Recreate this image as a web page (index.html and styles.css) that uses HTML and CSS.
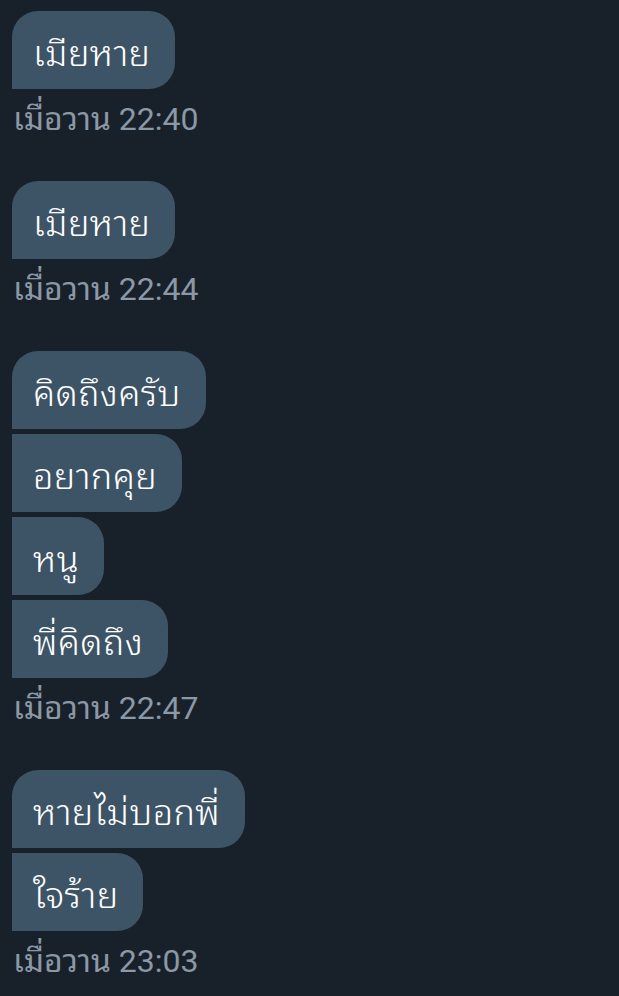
FILE: index.html
```html
<!DOCTYPE html>
<html lang="th">
<head>
<meta charset="utf-8">
<title>Messages</title>
<link rel="stylesheet" href="styles.css">
</head>
<body>
<main class="thread">
  <section class="group">
    <div class="bubble">เมียหาย</div>
    <div class="time">เมื่อวาน 22:40</div>
  </section>
  <section class="group">
    <div class="bubble">เมียหาย</div>
    <div class="time">เมื่อวาน 22:44</div>
  </section>
  <section class="group">
    <div class="bubble">คิดถึงครับ</div>
    <div class="bubble">อยากคุย</div>
    <div class="bubble">หนู</div>
    <div class="bubble">พี่คิดถึง</div>
    <div class="time">เมื่อวาน 22:47</div>
  </section>
  <section class="group">
    <div class="bubble">หายไม่บอกพี่</div>
    <div class="bubble">ใจร้าย</div>
    <div class="time">เมื่อวาน 23:03</div>
  </section>
</main>
</body>
</html>
```

FILE: styles.css
```css
html, body {
  margin: 0;
  padding: 0;
  background: #18202a;
}

.thread {
  display: flex;
  flex-direction: column;
  gap: 44px;
  padding: 11px 12px;
}

.group {
  display: flex;
  flex-direction: column;
  align-items: flex-start;
  gap: 5px;
}

.bubble {
  background: #3d5466;
  color: #ffffff;
  font-family: "Noto Sans Thai Looped", "Noto Looped Thai UI", "Noto Looped Thai", "Noto Sans Thai UI Looped", "Loma", "Garuda", "Waree", "Norasi", "Noto Sans Thai", sans-serif;
  font-size: 36px;
  font-weight: 350;
  letter-spacing: 0.4px;
  height: 78px;
  line-height: 78px;
  padding: 0 25px 0 21px;
  border-radius: 0 26px 26px 0;
  white-space: nowrap;
}

.bubble:first-child {
  border-top-left-radius: 26px;
}

.time {
  margin-top: 7px;
  color: #8b98a5;
  font-family: Roboto, "Noto Sans Thai Looped", "Noto Looped Thai UI", "Noto Looped Thai", "Loma", "Garuda", "Waree", "Noto Sans Thai", sans-serif;
  font-size: 32px;
  line-height: 36px;
  padding-left: 1px;
}
```
